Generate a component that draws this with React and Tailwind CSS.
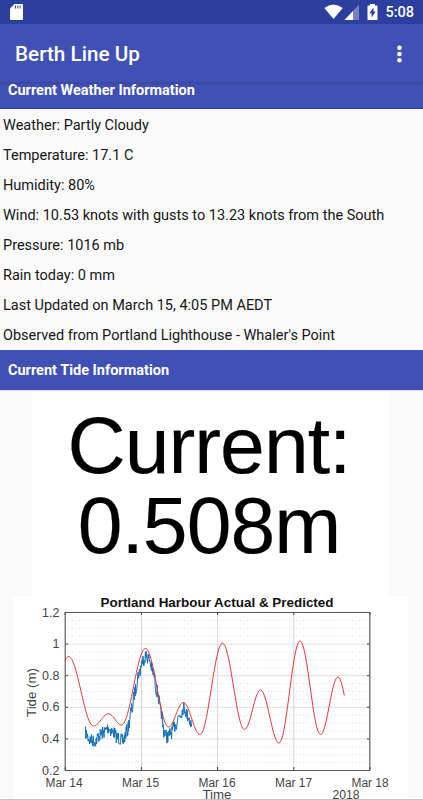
import React from "react";

const weather = [
  "Weather: Partly Cloudy",
  "Temperature: 17.1 C",
  "Humidity: 80%",
  "Wind: 10.53 knots with gusts to 13.23 knots from the South",
  "Pressure: 1016 mb",
  "Rain today: 0 mm",
  "Last Updated on March 15, 4:05 PM AEDT",
  "Observed from Portland Lighthouse - Whaler's Point",
];

// high and low water turning points, in chart units
const predicted = [
  [62, 664],
  [68.5, 656.5],
  [93.5, 726],
  [108.5, 713.7],
  [121.5, 725],
  [145.5, 648.5],
  [168.5, 727],
  [183.3, 702.5],
  [200, 734.5],
  [222.5, 643.3],
  [244.5, 729.5],
  [260.5, 690],
  [279, 743],
  [300, 641],
  [320.5, 734.5],
  [338, 677],
  [354, 732],
];

const actual = [
  [85.5, 733],
  [90, 740],
  [95, 741],
  [100, 735],
  [104, 732],
  [108, 728],
  [113, 732],
  [118, 738],
  [123, 741],
  [127, 731],
  [132, 709],
  [135, 691],
  [139, 673],
  [143, 660],
  [146, 656],
  [149, 659],
  [153, 672],
  [157, 691],
  [161, 712],
  [164, 731],
  [167, 737],
  [171, 733],
  [175, 726],
  [180, 714],
  [184, 708],
  [188, 716],
  [192, 725],
];

const valueAt = (points, x) => {
  let i = 0;
  while (i < points.length - 2 && x > points[i + 1][0]) i++;
  const [x0, y0] = points[i];
  const [x1, y1] = points[i + 1];
  const t = (1 - Math.cos((Math.PI * (x - x0)) / (x1 - x0))) / 2;
  return y0 + (y1 - y0) * t;
};

const buildLine = (points, from, to, step, jitter) => {
  const out = [];
  let seed = 7;
  for (let x = from; x <= to; x += step) {
    seed = (seed * 16807) % 2147483647;
    const noise = (seed / 2147483647 - 0.5) * jitter;
    out.push(`${x.toFixed(2)},${(valueAt(points, x) + noise).toFixed(2)}`);
  }
  return out.join(" ");
};

const yTicks = ["1.2", "1", "0.8", "0.6", "0.4", "0.2"];
const xTicks = ["Mar 14", "Mar 15", "Mar 16", "Mar 17", "Mar 18"];
const minorLines = Array.from({ length: 20 }, (_, i) => i).filter(
  (i) => i % 4 !== 0
);

const TideChart = () => (
  <svg
    className="block h-[203px] w-[395px] bg-white"
    viewBox="13 596 395 203"
    fontFamily='"Liberation Sans", Arial, sans-serif'
    fontSize="12.5"
    fill="#444"
  >
    <text
      x="217"
      y="607"
      textAnchor="middle"
      fontSize="12.8"
      fontWeight="bold"
      fill="#111"
      textLength="233"
      lengthAdjust="spacingAndGlyphs"
    >
      Portland Harbour Actual &amp; Predicted
    </text>
    {/* grid */}
    {minorLines.map((i) => (
      <path
        key={i}
        d={`M65 ${612.5 + i * 7.9}H370`}
        stroke="#d6d6d6"
        strokeWidth="0.8"
        strokeDasharray="1 2.5"
      />
    ))}
    {yTicks.map((label, i) => (
      <g key={label}>
        <path d={`M65 ${612.5 + i * 31.6}H370`} stroke="#dedede" />
        <path
          d={`M65 ${612.5 + i * 31.6}h3M370 ${612.5 + i * 31.6}h-3`}
          stroke="#444"
        />
        <text x="59.5" y={616.5 + i * 31.6} textAnchor="end">
          {label}
        </text>
      </g>
    ))}
    {xTicks.map((label, i) => (
      <g key={label}>
        <path d={`M${65.2 + i * 76.2} 612V770`} stroke="#d4d4d4" />
        <path
          d={`M${65.2 + i * 76.2} 612v3M${65.2 + i * 76.2} 770v-3`}
          stroke="#444"
        />
        <text
          x={64 + i * 76.5}
          y="786.5"
          textAnchor="middle"
          textLength="37"
          lengthAdjust="spacingAndGlyphs"
        >
          {label}
        </text>
      </g>
    ))}
    <rect
      x="65.2"
      y="612.5"
      width="304.6"
      height="158"
      fill="none"
      stroke="#555"
    />
    {/* tide lines */}
    <polyline
      points={buildLine(actual, 85.5, 192, 0.35, 13)}
      fill="none"
      stroke="#1470b8"
      strokeWidth="1"
    />
    <polyline
      points={buildLine(predicted, 65, 344.8, 0.7, 0)}
      fill="none"
      stroke="#e0353f"
      strokeWidth="1"
    />
    <text
      transform="translate(36 692.5) rotate(-90)"
      textAnchor="middle"
      textLength="49"
      lengthAdjust="spacingAndGlyphs"
      fontSize="13"
    >
      Tide (m)
    </text>
    <text
      x="217"
      y="799"
      textAnchor="middle"
      fontSize="12"
      textLength="29"
      lengthAdjust="spacingAndGlyphs"
    >
      Time
    </text>
    <text
      x="346"
      y="799"
      textAnchor="middle"
      fontSize="12"
      textLength="27"
      lengthAdjust="spacingAndGlyphs"
    >
      2018
    </text>
  </svg>
);

const StatusBar = () => (
  <div className="flex h-6 shrink-0 items-center justify-between bg-[#2c3e9e] pr-[9px] pl-[10px]">
    <svg className="h-4 w-[13px]" viewBox="0 0 13 16" fill="white">
      <path d="M4.5 0H12q1 0 1 1v14q0 1-1 1H1q-1 0-1-1V4.5z" />
      <path d="M5.5 1.5v3M7.8 1.5v3M10.1 1.5v3" stroke="#2c3e9e" />
    </svg>
    <div className="flex items-center">
      <svg className="h-4 w-[58px]" viewBox="325 4 58 16" fill="white">
        <path d="M325.3 8Q334.5 1 343.7 8L334.5 19z" />
        <path d="M360 4.5V20H345.5z" opacity="0.35" />
        <path d="M354 11V20H345.5z" />
        <path d="M371 4h5v1.5h2q.5 0 .5.5V19.5q0 .5-.5.5h-9q-.5 0-.5-.5V6q0-.5.5-.5h2z" />
        <path d="M374.5 7.5v4h2.200L372.6 17.5v-4.200h-2.200z" fill="#2c3e9e" />
      </svg>
      <span className="ml-[3px] pt-0.5 text-[14.5px] leading-[22px] font-medium text-white">
        5:08
      </span>
    </div>
  </div>
);

const SectionTitle = ({ children, className }) => (
  <h2
    className={`flex items-center bg-[#4050b5] pl-2 text-[14.5px] font-bold text-white ${className}`}
  >
    {children}
  </h2>
);

const App = () => {
  return (
    <div className="flex h-[800px] w-[423px] flex-col overflow-hidden border-b border-[#c4c4c4] bg-[#fafafa] font-[Roboto,sans-serif]">
      <StatusBar />
      {/* app bar */}
      <header className="flex h-[58px] shrink-0 items-center justify-between bg-[#4050b5] pt-0.5 pr-[21px] pl-[15px]">
        <h1 className="pt-0.5 text-[20.7px] font-medium text-white">
          Berth Line Up
        </h1>
        <svg className="mb-px h-[18px] w-[5px]" viewBox="0 0 5 18" fill="white">
          <circle cx="2.5" cy="2.7" r="2.3" />
          <circle cx="2.5" cy="9" r="2.3" />
          <circle cx="2.5" cy="15.3" r="2.3" />
        </svg>
      </header>
      <SectionTitle className="h-[27px] shrink-0 border-b border-[#35449c] bg-linear-to-b from-[#38479f] to-[#4050b5] to-15% pb-[9px]">
        Current Weather Information
      </SectionTitle>
      <ul className="h-[241px] shrink-0 pt-0.5 pl-[3px] text-[14.5px] text-[#161616]">
        {weather.map((line) => (
          <li key={line} className="h-[30px] leading-[30px] whitespace-nowrap">
            {line}
          </li>
        ))}
      </ul>
      <SectionTitle className="h-10 shrink-0 pt-0.5">
        Current Tide Information
      </SectionTitle>
      <div className="shrink-0 border-t border-[#dbe1fc] pl-8">
        <div className="flex h-[205px] w-[357px] flex-col items-center bg-white pt-3.5 pr-[3px] font-['Liberation_Sans',Arial,sans-serif] text-[80.5px] leading-20 tracking-[-1px] text-black [-webkit-text-stroke:0.2px_black]">
          <span>Current:</span>
          <span>0.508m</span>
        </div>
      </div>
      <div className="shrink-0 pl-[13px]">
        <TideChart />
      </div>
    </div>
  );
};

export default App;
